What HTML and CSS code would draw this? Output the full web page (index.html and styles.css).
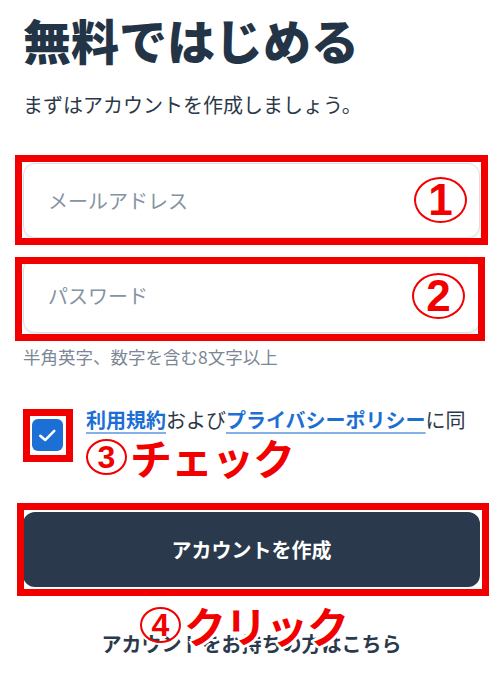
FILE: index.html
```html
<!DOCTYPE html>
<html lang="ja">
<head>
<meta charset="utf-8">
<title>無料ではじめる</title>
<link rel="stylesheet" href="styles.css">
</head>
<body>
<main class="page">
  <h1 class="title">無料ではじめる</h1>
  <p class="lead">まずはアカウントを作成しましょう。</p>

  <form class="form">
    <div class="field">
      <input class="input" type="email" placeholder="メールアドレス">
      <span class="mark mark-1"></span>
      <span class="circ circ-big circ-1">1</span>
    </div>
    <div class="field field-2">
      <input class="input" type="password" placeholder="パスワード">
      <span class="mark mark-2"></span>
      <span class="circ circ-big circ-2">2</span>
    </div>
    <p class="hint">半角英字、数字を含む8文字以上</p>

    <div class="agree">
      <div class="check-wrap">
        <span class="checkbox">
          <svg viewBox="0 0 32 32" width="32" height="32" aria-hidden="true"><path d="M8.5 16.8 L13.6 21.2 L23 11.8" fill="none" stroke="#fff" stroke-width="2.6" stroke-linecap="round" stroke-linejoin="round"/></svg>
        </span>
        <span class="mark mark-3"></span>
      </div>
      <p class="agree-text"><a class="link" href="#">利用規約</a>および<a class="link" href="#">プライバシーポリシー</a>に同意する</p>
      <div class="note note-3"><span class="circ circ-small">3</span><span class="note-text">チェック</span></div>
    </div>

    <div class="btn-wrap">
      <button class="btn" type="button">アカウントを作成</button>
      <span class="mark mark-4"></span>
    </div>

    <div class="login">
      <a class="login-link" href="#">アカウントをお持ちの方はこちら</a>
      <div class="note note-4"><span class="circ circ-small">4</span><span class="note-text">クリック</span></div>
    </div>
  </form>
</main>
</body>
</html>
```

FILE: styles.css
```css
* { box-sizing: border-box; }

html, body {
  margin: 0;
  background: #ffffff;
}

body {
  font-family: "Noto Sans CJK JP", "Noto Sans", sans-serif;
  color: #253446;
  overflow: hidden;
}

.page {
  width: 500px;
  padding: 10px 20px 0 23px;
}

.title {
  margin: 0;
  font-size: 48px;
  line-height: 58px;
  font-weight: 900;
  color: #243447;
  letter-spacing: 0;
}

.lead {
  margin: 22px 0 0;
  font-size: 20px;
  line-height: 30px;
  color: #2b3847;
}

.form {
  margin-top: 43px;
}

.field {
  position: relative;
  height: 75px;
}

.field-2 {
  margin-top: 20px;
}

.input {
  display: block;
  width: 100%;
  height: 75px;
  border: 1px solid #d9dee6;
  border-radius: 12px;
  background: #ffffff;
  box-shadow: 0 2px 2px rgba(40, 60, 90, 0.08);
  padding: 0 24px;
  font-family: "Noto Sans CJK JP", sans-serif;
  font-size: 20px;
  color: #253446;
  outline: none;
}

.input::placeholder {
  color: #8593a3;
}

.mark {
  position: absolute;
  border: 7px solid #f20000;
  pointer-events: none;
}

.mark-1 { left: -8px; right: -8px; top: -8px; bottom: -7px; }
.mark-2 { left: -8px; right: -5px; top: -1px; bottom: -8px; }
.mark-3 { left: -9px; right: -10px; top: -10px; bottom: -11px; }
.mark-4 { left: -6px; right: -9px; top: -9px; bottom: -9px; }

.circ {
  display: inline-flex;
  align-items: center;
  justify-content: center;
  border: 2.5px solid #f20000;
  border-radius: 50%;
  color: #f20000;
  font-family: "Liberation Sans", "Noto Sans", sans-serif;
  font-weight: 700;
  line-height: 1;
}

.circ-big {
  position: absolute;
  width: 53px;
  height: 46px;
  font-size: 44px;
}

.circ-1 { right: 13px; top: 14px; }
.circ-2 { right: 15px; top: 15px; }

.circ-small {
  width: 41px;
  height: 36px;
  font-size: 32px;
  flex: none;
  box-shadow: 0 0 0 2px #fff;
  text-shadow: 2px 0 0 #fff, -2px 0 0 #fff, 0 2px 0 #fff, 0 -2px 0 #fff;
}

.hint {
  margin: 11px 0 0;
  font-size: 17.5px;
  line-height: 26px;
  color: #7c8796;
}

.agree {
  position: relative;
  display: flex;
  align-items: flex-start;
  gap: 23px;
  margin-top: 35px;
}

.check-wrap {
  position: relative;
  flex: none;
  margin: 14px 0 0 9px;
  width: 31px;
  height: 32px;
}

.checkbox {
  display: flex;
  align-items: center;
  justify-content: center;
  width: 31px;
  height: 32px;
  border-radius: 6px;
  background: #1c6fd4;
}

.agree-text {
  margin: 0;
  font-size: 20px;
  line-height: 30px;
  color: #2b3847;
}

.link {
  color: #1c6fd4;
  font-weight: 700;
  text-decoration: underline;
  text-decoration-color: rgba(28, 111, 212, 0.55);
  text-decoration-thickness: 2px;
  text-underline-offset: 4px;
}

.note {
  position: absolute;
  display: flex;
  align-items: center;
  gap: 3px;
  color: #f20000;
}

.note-text {
  font-size: 42px;
  line-height: 44px;
  font-weight: 700;
  letter-spacing: -1px;
  text-shadow:
    3px 0 0 #fff, -3px 0 0 #fff, 0 3px 0 #fff, 0 -3px 0 #fff,
    2px 2px 0 #fff, -2px 2px 0 #fff, 2px -2px 0 #fff, -2px -2px 0 #fff;
}

.note-3 {
  left: 63px;
  top: 30px;
  background: #ffffff;
  padding: 0 4px 0 0;
}

.btn-wrap {
  position: relative;
  margin-top: 47px;
}

.btn {
  display: block;
  width: 100%;
  height: 75px;
  border: none;
  border-radius: 12px;
  background: #2a3a4c;
  color: #ffffff;
  font-family: "Noto Sans CJK JP", sans-serif;
  font-size: 20px;
  font-weight: 700;
}

.login {
  position: relative;
  margin-top: 42px;
  text-align: center;
  line-height: 30px;
}

.login-link {
  font-size: 20px;
  font-weight: 700;
  color: #2a3a4c;
  text-decoration: none;
}

.note-4 {
  left: 117px;
  top: -26px;
}
```
